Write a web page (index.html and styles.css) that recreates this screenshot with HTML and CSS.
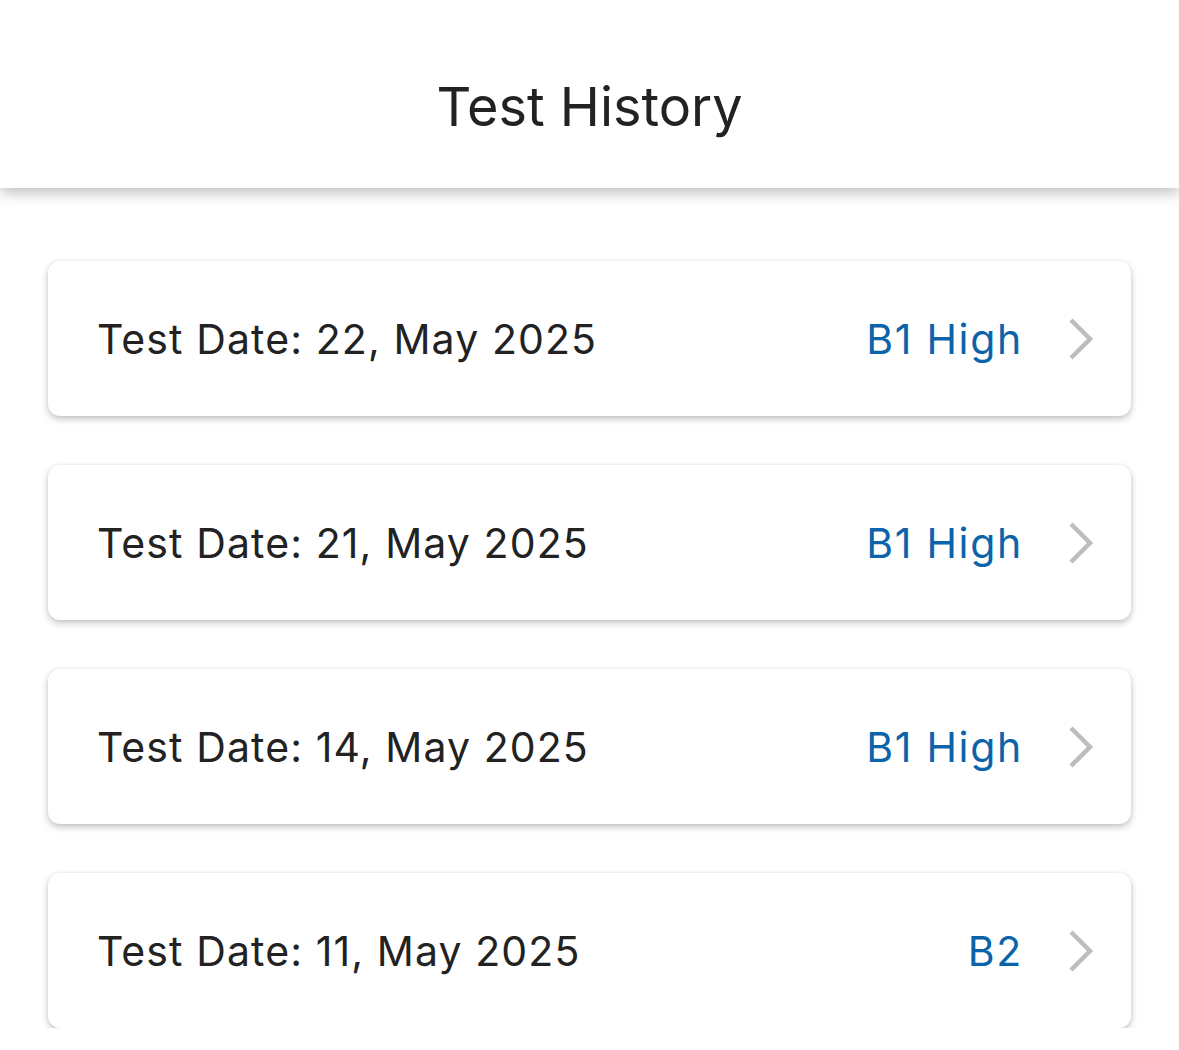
FILE: index.html
```html
<!DOCTYPE html>
<html>
<head>
<meta charset="utf-8">
<link rel="stylesheet" href="styles.css">
</head>
<body>
<header class="appbar"><h1 class="title">Test History</h1></header>
<main class="list">
  <div class="card"><span class="date">Test Date: 22, May 2025</span><span class="level">B1 High</span><svg class="chev" viewBox="0 0 28 44" width="28" height="44"><path d="M4 3 L23 22 L4 41" fill="none" stroke="#bdbdbd" stroke-width="4.5"/></svg></div>
  <div class="card"><span class="date">Test Date: 21, May 2025</span><span class="level">B1 High</span><svg class="chev" viewBox="0 0 28 44" width="28" height="44"><path d="M4 3 L23 22 L4 41" fill="none" stroke="#bdbdbd" stroke-width="4.5"/></svg></div>
  <div class="card"><span class="date">Test Date: 14, May 2025</span><span class="level">B1 High</span><svg class="chev" viewBox="0 0 28 44" width="28" height="44"><path d="M4 3 L23 22 L4 41" fill="none" stroke="#bdbdbd" stroke-width="4.5"/></svg></div>
  <div class="card"><span class="date">Test Date: 11, May 2025</span><span class="level">B2</span><svg class="chev" viewBox="0 0 28 44" width="28" height="44"><path d="M4 3 L23 22 L4 41" fill="none" stroke="#bdbdbd" stroke-width="4.5"/></svg></div>
</main>
</body>
</html>
```

FILE: styles.css
```css
html, body {
  margin: 0;
  padding: 0;
  background: #ffffff;
  font-family: Inter, "Noto Sans", sans-serif;
  color: #222222;
}
.appbar {
  height: 188px;
  background: #ffffff;
  display: flex;
  align-items: center;
  justify-content: center;
  box-shadow: 0 4px 14px rgba(0, 0, 0, 0.28);
  position: relative;
  z-index: 1;
}
.title {
  margin: 0;
  font-size: 54px;
  font-weight: 400;
  letter-spacing: 0;
  color: #222222;
  padding-top: 24px;
}
.list {
  display: flex;
  flex-direction: column;
  gap: 49px;
  padding: 73px 48px 0 48px;
}
.card {
  height: 155px;
  background: #ffffff;
  border-radius: 12px;
  box-shadow: 0 3px 7px rgba(0, 0, 0, 0.24), 0 0 3px rgba(0, 0, 0, 0.06);
  display: flex;
  align-items: center;
  padding: 0 36px 0 49px;
  box-sizing: border-box;
}
.date {
  flex: 1;
  font-size: 41px;
  letter-spacing: 1.1px;
  color: #222222;
}
.level {
  font-size: 41px;
  letter-spacing: 1.7px;
  color: #0b64aa;
  margin-right: 44px;
}
.chev {
  display: block;
}
```
